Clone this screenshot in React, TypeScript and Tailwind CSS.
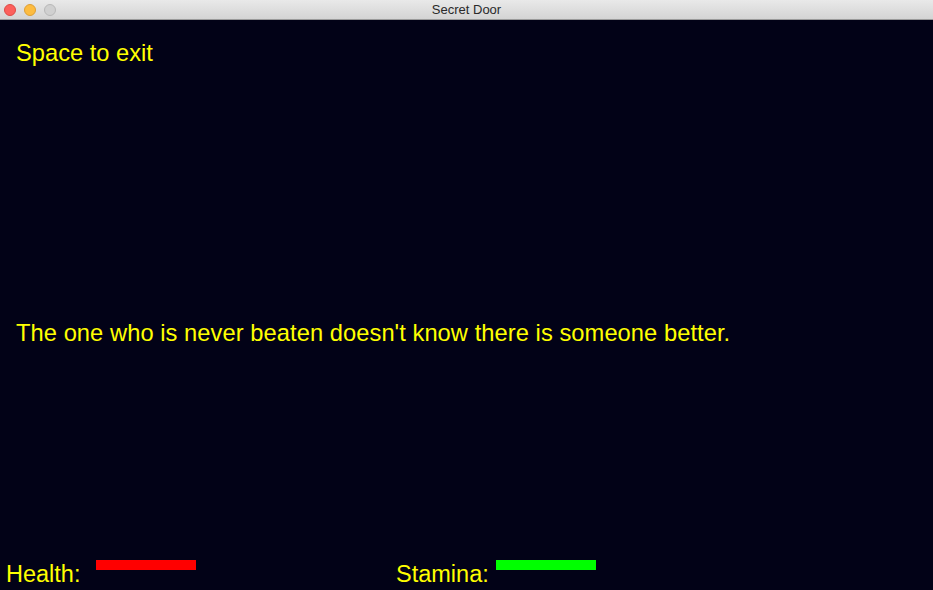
import React from "react";

export default function App() {
  const font = { fontFamily: '"Liberation Sans", Arial, sans-serif' };
  return (
    <div className="w-[933px] h-[590px] flex flex-col overflow-hidden bg-[#020217]" style={font}>
      <div className="h-[20px] shrink-0 flex items-center relative bg-gradient-to-b from-[#e9e9e9] to-[#d4d4d4] border-b border-[#9a9a9a]">
        <div className="flex items-center gap-[8px] pl-[4px]">
          <div className="w-[12px] h-[12px] rounded-full bg-[#fc605c] border border-[#de4a45]" />
          <div className="w-[12px] h-[12px] rounded-full bg-[#fdbc40] border border-[#de9f34]" />
          <div className="w-[12px] h-[12px] rounded-full bg-[#d0d0d0] border border-[#b8b8b8]" />
        </div>
        <div className="absolute inset-0 flex items-center justify-center text-[13px] text-[#2a2a2a]">
          Secret Door
        </div>
      </div>
      <div className="flex-1 flex flex-col text-[#ffff00]">
        <div className="pl-[16px] pt-[19px] text-[23.7px] leading-[28px]">Space to exit</div>
        <div className="pl-[16px] mt-[252px] text-[23.7px] leading-[28px] tracking-[0.06px]">
          The one who is never beaten doesn't know there is someone better.
        </div>
        <div className="mt-auto flex items-start h-[36px]">
          <div className="flex items-start w-[396px] pl-[6px]">
            <span className="text-[23.5px] leading-[26px] mt-[7px] w-[90px]">Health:</span>
            <div className="w-[100px] h-[10px] mt-[6px] bg-[#ff0000]" />
          </div>
          <div className="flex items-start">
            <span className="text-[23.5px] leading-[26px] mt-[7px] w-[100px]">Stamina:</span>
            <div className="w-[100px] h-[10px] mt-[6px] bg-[#00ff00]" />
          </div>
        </div>
      </div>
    </div>
  );
}
